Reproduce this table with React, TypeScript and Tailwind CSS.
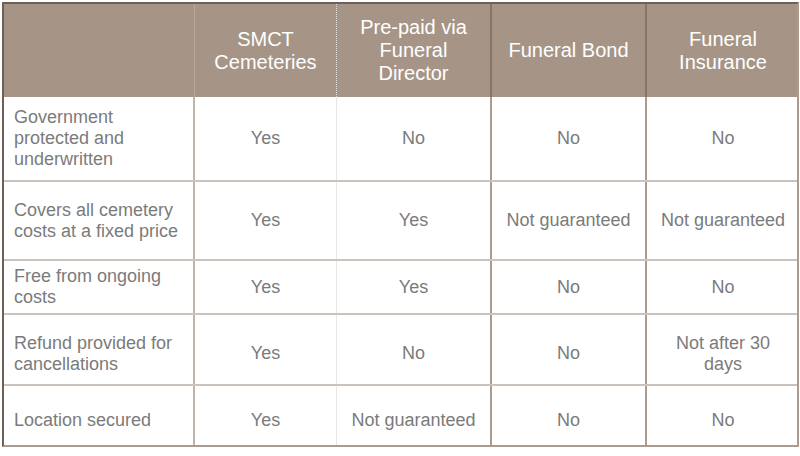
import React from "react";

const headers = [
  "",
  "SMCT Cemeteries",
  "Pre-paid via Funeral Director",
  "Funeral Bond",
  "Funeral Insurance",
];

const rows = [
  { label: "Government protected and underwritten", cells: ["Yes", "No", "No", "No"], h: "h-[83px]", pad: "" },
  { label: "Covers all cemetery costs at a fixed price", cells: ["Yes", "Yes", "Not guaranteed", "Not guaranteed"], h: "h-[79px]", pad: "" },
  { label: "Free from ongoing costs", cells: ["Yes", "Yes", "No", "No"], h: "h-[54px]", pad: "" },
  { label: "Refund provided for cancellations", cells: ["Yes", "No", "No", "Not after 30 days"], h: "h-[71px]", pad: "pt-[8px]" },
  { label: "Location secured", cells: ["Yes", "Not guaranteed", "No", "No"], h: "h-[61px]", pad: "pt-[10px]" },
];

// widths of the five columns, borders included
const widths = ["w-[191px]", "w-[142px]", "w-[155px]", "w-[155px]", "w-[152px]"];

const headBorders = [
  "border-r border-r-[#b7a899]",
  "border-r border-dotted border-r-[#e9e2dc]",
  "border-r-2 border-r-[#85766a]",
  "border-r-2 border-r-[#85766a]",
  "",
];

const bodyBorders = [
  "border-r-2 border-r-[#bdb4ac]",
  "border-r border-r-[#e6e6e6]",
  "border-r-2 border-r-[#a99b8f]",
  "border-r-2 border-r-[#a99b8f]",
  "",
];

export default function App() {
  return (
    <div className="w-[800px] h-[456px] bg-white pt-[2px] pl-[2px] font-['Liberation_Sans',Arial,sans-serif]">
      <div className="w-[797px] border-t-2 border-l-2 border-t-[#6e6057] border-l-[#6e6057] border-r-2 border-r-[#a99b8f] border-b-2 border-b-[#a99b8f]">
        {/* header */}
        <div className="flex h-[93px] bg-[#a69586]">
          {headers.map((h, i) => (
            <div
              key={i}
              className={`${widths[i]} ${headBorders[i]} shrink-0 flex items-center justify-center px-3 text-center text-[20px] leading-[23px] text-white`}
            >
              {h}
            </div>
          ))}
        </div>

        {rows.map((r, ri) => (
          <div
            key={ri}
            className={`flex ${r.h} ${ri === 0 ? "" : "border-t-2 border-t-[#cbc3bb]"}`}
          >
            <div
              className={`${widths[0]} ${bodyBorders[0]} ${r.pad} shrink-0 flex items-center pl-[10px] pr-2 text-[18px] leading-[21px] text-[#7b7b7b]`}
            >
              {r.label}
            </div>
            {r.cells.map((c, ci) => (
              <div
                key={ci}
                className={`${widths[ci + 1]} ${bodyBorders[ci + 1]} ${r.pad} shrink-0 flex items-center justify-center px-3 text-center text-[18px] leading-[21px] text-[#7b7b7b]`}
              >
                {c}
              </div>
            ))}
          </div>
        ))}
      </div>
    </div>
  );
}
